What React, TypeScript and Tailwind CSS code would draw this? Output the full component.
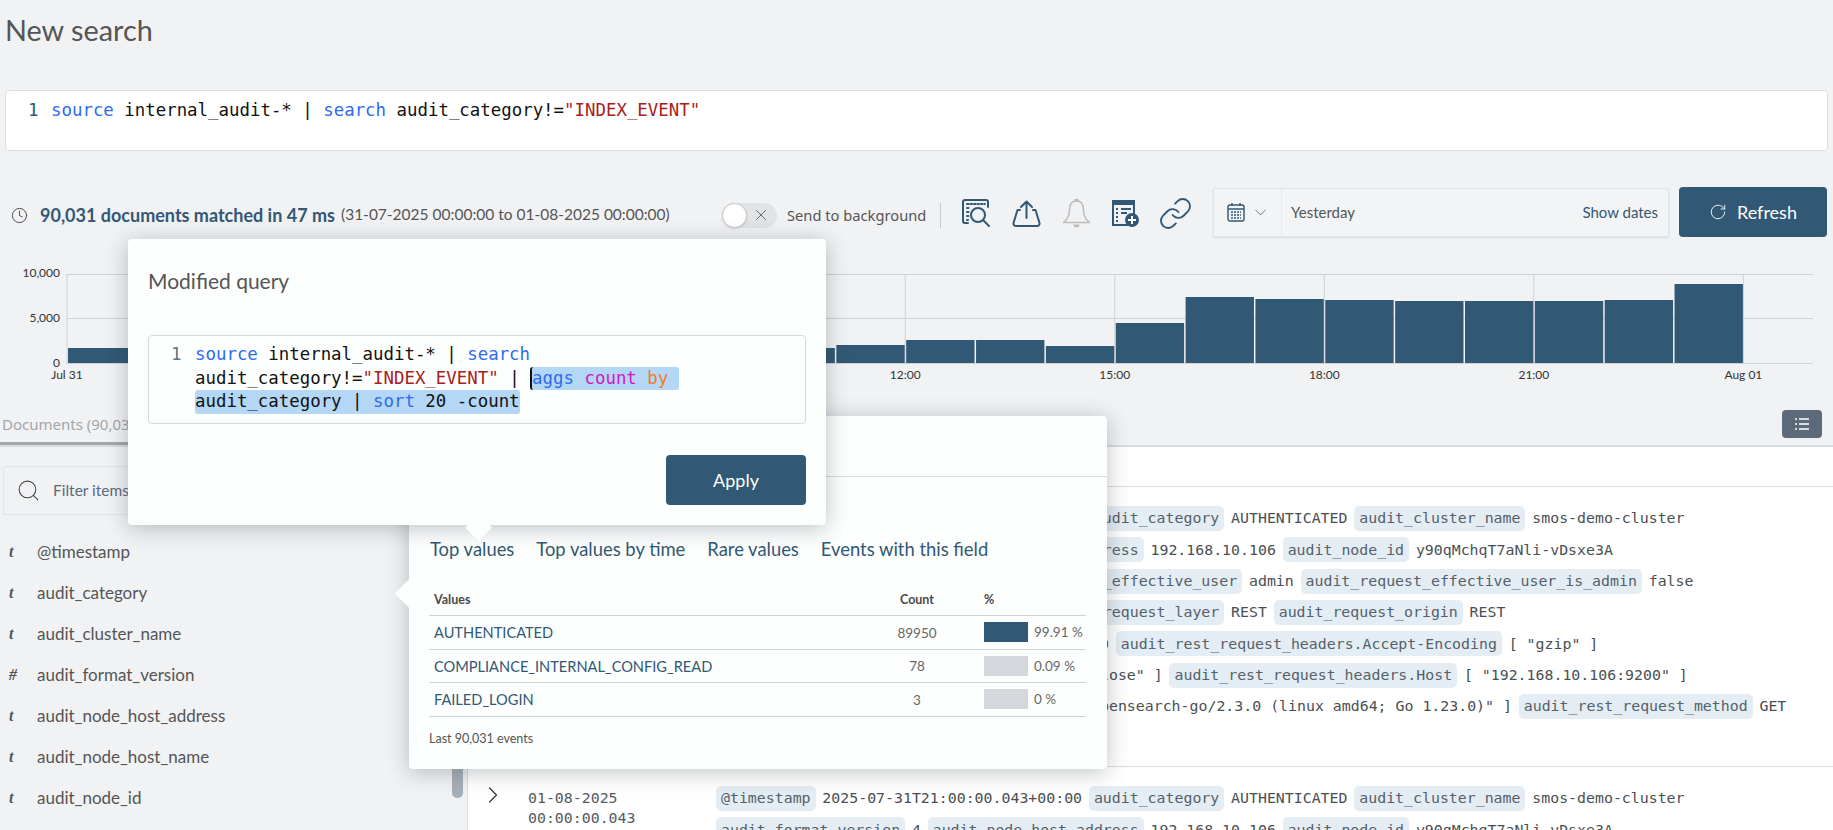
import { ChevronDown, ChevronRight, Clock, Link, RotateCw, Search, X } from "lucide-react";

const MONO = "font-['DejaVu_Sans_Mono',monospace]";
const SANS = "font-['Lato',sans-serif]";

const fields = [
  { type: "t", name: "@timestamp" },
  { type: "t", name: "audit_category" },
  { type: "t", name: "audit_cluster_name" },
  { type: "#", name: "audit_format_version" },
  { type: "t", name: "audit_node_host_address" },
  { type: "t", name: "audit_node_host_name" },
  { type: "t", name: "audit_node_id" },
];

const docLines: [string, string][][] = [
  [
    ["@timestamp", "2025-07-31T21:00:00.043+00:00"],
    ["audit_category", "AUTHENTICATED"],
    ["audit_cluster_name", "smos-demo-cluster"],
  ],
  [
    ["audit_format_version", "4"],
    ["audit_node_host_address", "192.168.10.106"],
    ["audit_node_id", "y90qMchqT7aNli-vDsxe3A"],
  ],
  [
    ["audit_node_name", "smos-node-01"],
    ["audit_request_effective_user", "admin"],
    ["audit_request_effective_user_is_admin", "false"],
  ],
  [
    ["audit_request_initiating_user", "admin"],
    ["audit_request_layer", "REST"],
    ["audit_request_origin", "REST"],
  ],
  [
    ["audit_request_remote_address", "192.168.10.100"],
    ["audit_rest_request_headers.Accept-Encoding", '[ "gzip" ]'],
  ],
  [
    ["audit_rest_request_headers.Connection", '[ "close" ]'],
    ["audit_rest_request_headers.Host", '[ "192.168.10.106:9200" ]'],
  ],
  [
    ["audit_rest_request_headers.User-Agent", '[ "opensearch-go/2.3.0 (linux amd64; Go 1.23.0)" ]'],
    ["audit_rest_request_method", "GET"],
  ],
];

// top edge of every hourly bar, in chart pixels
const barTops = [348, 363, 363, 363, 363, 363, 363, 363, 363, 363, 348, 345, 340, 340, 346, 323, 297, 299, 300, 301, 301, 301, 300, 284];

const topValues = [
  { name: "AUTHENTICATED", count: "89950", pct: "99.91 %", active: true },
  { name: "COMPLIANCE_INTERNAL_CONFIG_READ", count: "78", pct: "0.09 %", active: false },
  { name: "FAILED_LOGIN", count: "3", pct: "0 %", active: false },
];

function Histogram() {
  const x0 = 67;
  const step = 69.85;
  const ticks = [
    { h: 0, label: "Jul 31" },
    { h: 3, label: "03:00" },
    { h: 6, label: "06:00" },
    { h: 9, label: "09:00" },
    { h: 12, label: "12:00" },
    { h: 15, label: "15:00" },
    { h: 18, label: "18:00" },
    { h: 21, label: "21:00" },
    { h: 24, label: "Aug 01" },
  ];
  return (
    <svg width="1833" height="125" viewBox="0 265 1833 125" className="block" fontFamily="Lato, sans-serif" fontSize="12" fill="#333">
      {[274, 318, 363].map((y) => (
        <line key={y} x1="66" x2="1813" y1={y + 0.5} y2={y + 0.5} stroke="#cfd2d6" />
      ))}
      {ticks.map((t) => (
        <line key={t.h} x1={x0 + t.h * step} x2={x0 + t.h * step} y1="274" y2="363" stroke="#cfd2d6" />
      ))}
      {barTops.map((top, i) =>
        top < 363 ? (
          <rect key={i} x={x0 + i * step + 1} y={top} width={step - 1.5} height={363 - top} fill="#315874" />
        ) : null,
      )}
      <text x="60" y="277" textAnchor="end">10,000</text>
      <text x="60" y="322" textAnchor="end">5,000</text>
      <text x="60" y="367" textAnchor="end">0</text>
      {ticks.map((t) => (
        <text key={t.h} x={x0 + t.h * step} y="379" textAnchor="middle">{t.label}</text>
      ))}
    </svg>
  );
}

function QueryIcon() {
  return (
    <svg width="30" height="30" viewBox="0 0 30 30" fill="none" stroke="#315874" strokeWidth="2" strokeLinecap="round">
      <path d="M7 25H4a2 2 0 0 1-2-2V4a2 2 0 0 1 2-2h21a2 2 0 0 1 2 2v5" />
      <path d="M6 6h18M6 10h2M6 14h2M6 18h2M6 22h1" strokeDasharray="1.5 2" />
      <circle cx="17" cy="17" r="7" />
      <path d="M22 22l6 6" />
    </svg>
  );
}

function UploadIcon() {
  return (
    <svg width="29" height="27" viewBox="0 0 29 27" fill="none" stroke="#315874" strokeWidth="2" strokeLinecap="round" strokeLinejoin="round">
      <path d="M14.5 18V2M9 7l5.500-5.500L20 7" />
      <path d="M8 10H5.500L1.500 23a2.500 2.500 0 0 0 2.500 3h21a2.500 2.500 0 0 0 2.500-3L23.500 10H21" />
    </svg>
  );
}

function BellIcon() {
  return (
    <svg width="29" height="30" viewBox="0 0 29 30" fill="none" stroke="#bcbcbc" strokeWidth="1.500" strokeLinejoin="round">
      <path d="M12.500 3.500a2 2 0 0 1 4 0" />
      <path d="M14.500 3C9.500 3 7.500 7 7.500 12c0 6-1.500 9-6 12.500h26c-4.500-3.500-6-6.500-6-12.500 0-5-2-9-7-9z" />
      <path d="M11.500 26.500h6a3 3 0 0 1-6 0z" fill="#bcbcbc" stroke="none" />
    </svg>
  );
}

function AddReportIcon() {
  return (
    <svg width="27" height="27" viewBox="0 0 27 27" fill="none">
      <path d="M1 1h21v24H1z" fill="#f1f2f4" stroke="#315874" strokeWidth="2" />
      <path d="M1 1h21v4H1z" fill="#315874" />
      <path d="M4 9h2M9 9h10M4 13h2M9 13h6M4 17h2M4 21h2" stroke="#315874" strokeWidth="2" />
      <circle cx="20" cy="20" r="7" fill="#315874" />
      <path d="M20 16v8M16 20h8" stroke="#fff" strokeWidth="2" />
    </svg>
  );
}

function CalendarIcon() {
  return (
    <svg width="18" height="20" viewBox="0 0 18 20" fill="none" stroke="#315874" strokeWidth="1.400">
      <rect x="1" y="3" width="16" height="16" rx="2" />
      <path d="M1 7h16M5 1v3M13 1v3" />
      <path d="M4 10h10M4 13h10M4 16h10" strokeDasharray="2 1" />
    </svg>
  );
}

function ListIcon() {
  return (
    <svg width="16" height="14" viewBox="0 0 16 14" fill="none" stroke="#fff" strokeWidth="1.500">
      <path d="M1 2h2M5 2h10M1 7h2M5 7h10M1 12h2M5 12h10" />
    </svg>
  );
}

function DocRow({ date, time }: { date: string; time: string }) {
  return (
    <div className={`flex h-[280px] border-b border-[#d9dce0] pt-[16px] ${MONO} text-[14.880px] text-[#4a4f54]`}>
      <div className="w-[60px] pl-[11px]">
        <ChevronRight size={28} strokeWidth={1} className="-mt-[2px] text-[#333]" />
      </div>
      <div className="w-[188px] pt-[5px] text-[#555b60] leading-[20px]">
        <div>{date}</div>
        <div>{time}</div>
      </div>
      <div>
        {docLines.map((line, i) => (
          <div key={i} className="flex h-[31.300px] items-center gap-[6.800px] whitespace-nowrap">
            {line.map(([key, value]) => (
              <div key={key} className="contents">
                <span className="flex h-[25px] items-center rounded-[5px] bg-[#e4edf3] px-[5px] text-[#55616b]">{key}</span>
                <span>{value}</span>
              </div>
            ))}
          </div>
        ))}
      </div>
    </div>
  );
}

function ModifiedQueryPopover() {
  return (
    <div className="absolute left-[128px] top-[239px] z-20 h-[286px] w-[698px] rounded-[4px] bg-[#fdfefe] px-[20px] pt-[28px] shadow-[0_3px_22px_rgba(40,50,60,0.3)]">
      <div className={`h-[28px] text-[21px] leading-[28px] text-[#555] ${SANS}`}>Modified query</div>
      <div className={`mt-[40px] h-[89px] rounded-[4px] border border-[#d5d8dc] pt-[7px] ${MONO} text-[17.400px] leading-[23.700px] text-[#111]`}>
        <div className="flex">
          <div className="w-[46px] pl-[22px] text-[#66727c]">1</div>
          <div className="whitespace-pre">
            <div>
              <span className="text-[#2f6bf0]">source</span> internal_audit-* | <span className="text-[#2f6bf0]">search</span>
            </div>
            <div className="flex">
              <span>
                audit_category!=<span className="text-[#a82020]">"INDEX_EVENT"</span> |{" "}
              </span>
              <span className="rounded-[3px] border-l-2 border-[#111] bg-[#b3d7f5]">
                <span className="text-[#2f6bf0]">aggs</span> <span className="text-[#d016c6]">count</span>{" "}
                <span className="text-[#ee7d22]">by</span>{" "}
              </span>
            </div>
            <div className="w-fit rounded-[3px] bg-[#b3d7f5]">
              audit_category | <span className="text-[#2f6bf0]">sort</span> 20 -count
            </div>
          </div>
        </div>
      </div>
      <div className="mt-[31px] flex justify-end">
        <button className={`h-[50px] w-[140px] rounded-[4px] bg-[#315874] text-[18px] text-white ${SANS}`}>Apply</button>
      </div>
      <div className="absolute left-[341px] top-[279px] size-[19px] rotate-45 bg-[#fdfefe]" />
    </div>
  );
}

function TopValuesPopover() {
  return (
    <div className={`absolute left-[409px] top-[416px] z-10 h-[353px] w-[698px] rounded-[4px] bg-[#fdfefe] shadow-[0_3px_22px_rgba(40,50,60,0.3)] ${SANS}`}>
      <div className="absolute left-[-10px] top-[167px] size-[21px] rotate-45 bg-[#fdfefe]" />
      <div className="h-[61px] border-b border-[#d9dce0]" />
      <div className="flex gap-[22px] pl-[21px] pt-[60px] text-[18.400px] leading-[24px] text-[#315874]">
        <span>Top values</span>
        <span>Top values by time</span>
        <span>Rare values</span>
        <span>Events with this field</span>
      </div>
      <div className="ml-[20px] mr-[21px] mt-[25px]">
        <div className="grid h-[30px] grid-cols-[1fr_134px_102px] items-center border-b border-[#cfd2d6] text-[12.500px] font-bold text-[#4a4a4a]">
          <span className="pl-[5px]">Values</span>
          <span className="text-center">Count</span>
          <span>%</span>
        </div>
        {topValues.map((row) => (
          <div key={row.name} className="grid h-[33.500px] grid-cols-[1fr_134px_102px] items-center border-b border-[#cfd2d6] text-[14.600px]">
            <span className="pl-[5px] pt-[2px] text-[#315874]">{row.name}</span>
            <span className="pt-[1px] text-center text-[13.500px] text-[#666]">{row.count}</span>
            <span className="flex items-center gap-[6px] whitespace-nowrap text-[13.500px] text-[#666]">
              <span className={`h-[20px] w-[44px] ${row.active ? "bg-[#315874]" : "bg-[#d5d7dc]"}`} />
              {row.pct}
            </span>
          </div>
        ))}
        <div className="pt-[13px] text-[12.500px] text-[#555]">Last 90,031 events</div>
      </div>
    </div>
  );
}

export default function App() {
  return (
    <div className="relative h-[830px] w-[1833px] overflow-hidden bg-[#f1f2f4]">
      <div className={`h-[90px] pl-[5px] pt-[10px] text-[28.800px] leading-[40px] text-[#555] ${SANS}`}>New search</div>

      <div className={`mx-[5px] h-[61px] rounded-[4px] border border-[#dcdfe3] bg-white pt-[7px] ${MONO} text-[17.400px] leading-[24px] text-[#111]`}>
        <div className="flex whitespace-pre">
          <span className="w-[45px] pl-[22px] text-[#315874]">1</span>
          <span>
            <span className="text-[#2f6bf0]">source</span> internal_audit-* | <span className="text-[#2f6bf0]">search</span> audit_category!=
            <span className="text-[#a82020]">"INDEX_EVENT"</span>
          </span>
        </div>
      </div>

      <div className={`mt-[36px] flex h-[50px] items-center pl-[11px] pr-[6px] ${SANS}`}>
        <Clock size={17} strokeWidth={1.200} className="mt-[6px] shrink-0 text-[#333]" />
        <span className="ml-[12px] mt-[6px] w-[296px] shrink-0 whitespace-nowrap text-[18px] font-bold text-[#315874]">90,031 documents matched in 47 ms</span>
        <span className="ml-[5px] mt-[6px] w-[328px] shrink-0 whitespace-nowrap text-[15.500px] text-[#555]">(31-07-2025 00:00:00 to 01-08-2025 00:00:00)</span>
        <div className="ml-[53px] mt-[6px] flex h-[25px] w-[55px] shrink-0 items-center rounded-full bg-[#e1e4e7]">
          <span className="size-[25px] rounded-full border border-[#c8c8c8] bg-white shadow-sm" />
          <X size={18} strokeWidth={1} className="ml-[5px] text-[#444]" />
        </div>
        <span className="ml-[10px] mt-[6px] w-[140px] shrink-0 whitespace-nowrap font-['Noto_Sans',sans-serif] text-[14.700px] text-[#555]">Send to background</span>
        <span className="ml-[13px] mt-[6px] h-[25px] w-px shrink-0 bg-[#c8cbcf]" />
        <div className="ml-[20px] mt-[2px] flex shrink-0 items-center gap-[21px]">
          <QueryIcon />
          <UploadIcon />
          <BellIcon />
          <AddReportIcon />
          <span className="flex w-[30px] items-center justify-center">
            <Link size={35} strokeWidth={1.300} className="shrink-0 text-[#315874]" />
          </span>
        </div>
        <div className="ml-[23px] flex h-[49px] w-[456px] shrink-0 items-center rounded-[2px] border border-[#e2e4e7] bg-[#f3f4f6] shadow-[0_1px_2px_rgba(0,0,0,0.1)]">
          <div className="flex h-full w-[68px] items-center gap-[6px] border-r border-[#e8e9eb] pl-[13px]">
            <CalendarIcon />
            <ChevronDown size={19} strokeWidth={1} className="text-[#315874]" />
          </div>
          <span className="ml-[9px] text-[15px] text-[#555]">Yesterday</span>
          <span className="ml-auto mr-[10px] text-[15px] text-[#315874]">Show dates</span>
        </div>
        <button className="ml-[10px] flex h-[50px] w-[148px] shrink-0 items-center justify-center gap-[10px] rounded-[4px] bg-[#315874] text-[18px] text-white">
          <RotateCw size={18} strokeWidth={1.200} />
          Refresh
        </button>
      </div>

      <div className="mt-[28px]">
        <Histogram />
      </div>

      <div className="mt-[20px] flex h-[37px] items-start justify-between border-b-2 border-[#d8dbe0] pr-[11px] font-['Noto_Sans',sans-serif]">
        <span className="h-[35px] border-b-[3px] border-[#a3a6aa] pl-[2px] pr-[120px] pt-[3px] text-[15px] text-[#a3a6aa]">Documents (90,031)</span>
        <button className="flex h-[28px] w-[40px] items-center justify-center rounded-[4px] bg-[#5b6b79]">
          <ListIcon />
        </button>
      </div>

      <div className="relative flex h-[383px]">
        <div className={`w-[468px] shrink-0 border-r border-[#d9dce0] ${SANS}`}>
          <div className="mx-[3px] mt-[19px] flex h-[49px] w-[435px] items-center rounded-[2px] border border-[#e2e4e7] pl-[12px] text-[15.500px] text-[#5b6b79]">
            <Search size={25} strokeWidth={1} className="text-[#444]" />
            <span className="ml-[12px]">Filter items</span>
          </div>
          <div className="mt-[16px]">
            {fields.map((f) => (
              <div key={f.name} className="flex h-[41.100px] items-center text-[17px] text-[#555]">
                <span className="w-[37px] pl-[9px] font-['Liberation_Serif',serif] text-[16px] font-bold italic text-[#555]">{f.type}</span>
                <span>{f.name}</span>
              </div>
            ))}
          </div>
          <div className="absolute left-[452px] top-[300px] h-[51px] w-[11px] rounded-[5px] bg-[#a6b0b8]" />
        </div>
        <div className="flex-1 bg-white">
          <div className="h-[40px] border-b border-[#d9dce0]" />
          <DocRow date="01-08-2025" time="00:00:00.044" />
          <DocRow date="01-08-2025" time="00:00:00.043" />
        </div>
      </div>

      <TopValuesPopover />
      <ModifiedQueryPopover />
    </div>
  );
}
